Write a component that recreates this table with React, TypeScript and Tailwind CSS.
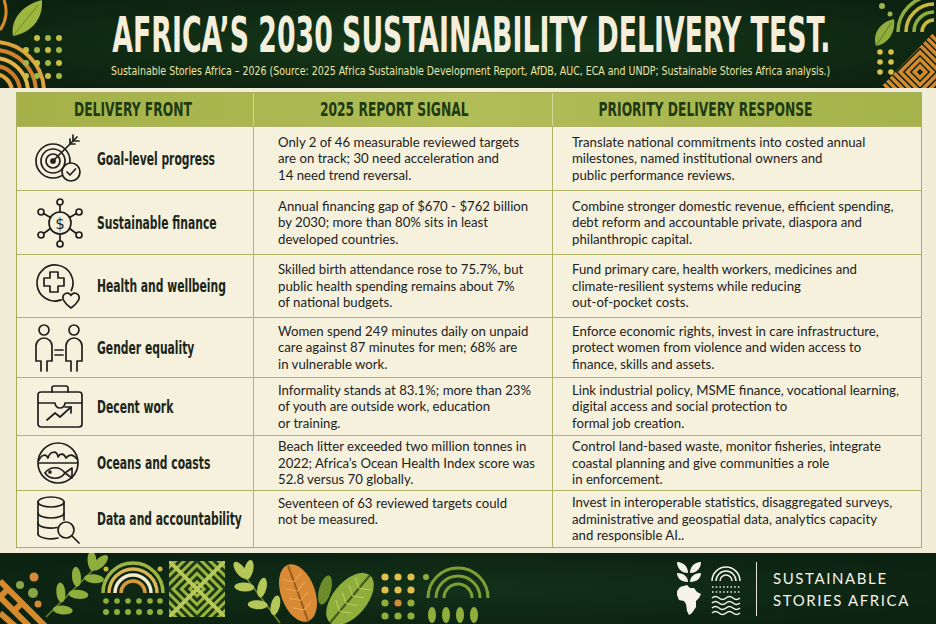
import React from "react";

const ink = "#1f1f1f";
const cream = "#f6f1dd";
const S = {
  fill: "none",
  stroke: ink,
  strokeWidth: 1.7,
  strokeLinecap: "round" as const,
  strokeLinejoin: "round" as const,
};

function TargetIcon() {
  return (
    <svg width="54" height="50" viewBox="0 0 54 50" {...S}>
      <circle cx="20" cy="27" r="17" />
      <circle cx="20" cy="27" r="12" />
      <circle cx="20" cy="27" r="7" />
      <circle cx="20" cy="27" r="2" fill={ink} />
      <path d="M20 27 L44 3" />
      <path d="M40 7 L40 1 M40 7 L46 7 M37 10 L37 5 M37 10 L42 10" />
      <circle cx="38" cy="38" r="9" fill={cream} />
      <path d="M34 38 L37 41 L42.5 35" />
    </svg>
  );
}

function FinanceIcon() {
  return (
    <svg width="54" height="50" viewBox="0 0 54 50" {...S}>
      <circle cx="27" cy="25" r="11" />
      <text x="27" y="30.5" textAnchor="middle" fontSize="15" fontFamily="DejaVu Sans" fill={ink} stroke="none">
        $
      </text>
      <path d="M27 14 V7 M27 36 V43 M17.5 19.5 L10.6 15.5 M36.5 19.5 L43.4 15.5 M17.5 30.5 L10.6 35.5 M36.5 30.5 L43.4 35.5" />
      <circle cx="27" cy="4" r="3" />
      <circle cx="27" cy="46" r="3" />
      <circle cx="8" cy="14" r="3" />
      <circle cx="46" cy="14" r="3" />
      <circle cx="8" cy="37" r="3" />
      <circle cx="46" cy="37" r="3" />
    </svg>
  );
}

function HealthIcon() {
  return (
    <svg width="54" height="50" viewBox="0 0 54 50" {...S}>
      <path d="M38.3 29.6 A18 18 0 1 0 28.2 38.9" />
      <path d="M17 11 h8 v6 h6 v8 h-6 v6 h-8 v-6 h-6 v-8 h6 z" />
      <path d="M38 47 C 31 42, 28 37, 31 33.5 C 33.5 31, 37 32, 38 34.5 C 39 32, 42.5 31, 45 33.5 C 48 37, 45 42, 38 47 Z" />
    </svg>
  );
}

function GenderIcon() {
  return (
    <svg width="54" height="50" viewBox="0 0 54 50" {...S}>
      <circle cx="11" cy="7" r="5" />
      <path d="M8 48 V38 H3 V23 a8 8 0 0 1 16 0 V38 H14 V48" />
      <path d="M22 27 H30 M22 32 H30" />
      <circle cx="41" cy="7" r="5" />
      <path d="M38 48 V38 H33 V23 a8 8 0 0 1 16 0 V38 H44 V48" />
    </svg>
  );
}

function WorkIcon() {
  return (
    <svg width="54" height="50" viewBox="0 0 54 50" {...S}>
      <path d="M19 10 V6 a2 2 0 0 1 2 -2 H33 a2 2 0 0 1 2 2 V10" />
      <rect x="5" y="10" width="44" height="35" rx="3" />
      <path d="M5 21 H22 a5 5 0 0 0 10 0 H49" />
      <path d="M14 38 L22 31 L27 35 L38 25" />
      <path d="M32 25 H38 V31" />
    </svg>
  );
}

function OceanIcon() {
  return (
    <svg width="54" height="50" viewBox="0 0 54 50" {...S}>
      <circle cx="25" cy="25" r="20" />
      <path d="M6 22 C 9 16, 13 16, 15 20 C 17 13, 24 12, 25 19 C 27 15, 31 15, 33 20 C 36 16, 40 16, 44 21" />
      <path d="M6 25 H44" />
      <path d="M12 35 C 17 28, 27 28, 32 35 C 27 42, 17 42, 12 35 Z" />
      <path d="M32 35 L39 30 V40 Z" />
      <circle cx="17" cy="34" r="1" fill={ink} />
    </svg>
  );
}

function DataIcon() {
  return (
    <svg width="54" height="50" viewBox="0 0 54 50" {...S}>
      <ellipse cx="18" cy="8" rx="13" ry="5" />
      <path d="M5 8 V40 M31 8 V26" />
      <path d="M5 19 A13 5 0 0 0 31 19" />
      <path d="M5 29 A13 5 0 0 0 24 33.5" />
      <path d="M5 40 A13 5 0 0 0 25 44" />
      <circle cx="33" cy="36" r="8" fill={cream} />
      <path d="M39 42 L46 49" />
    </svg>
  );
}

const rows = [
  {
    icon: TargetIcon,
    label: "Goal-level progress",
    h: "h-[64px]",
    signal: ["Only 2 of 46 measurable reviewed targets", "are on track; 30 need acceleration and", "14 need trend reversal."],
    response: ["Translate national commitments into costed annual", "milestones, named institutional owners and", "public performance reviews."],
  },
  {
    icon: FinanceIcon,
    label: "Sustainable finance",
    h: "h-[64px]",
    signal: ["Annual financing gap of $670 - $762 billion", "by 2030; more than 80% sits in least", "developed countries."],
    response: ["Combine stronger domestic revenue, efficient spending,", "debt reform and accountable private, diaspora and", "philanthropic capital."],
  },
  {
    icon: HealthIcon,
    label: "Health and wellbeing",
    h: "h-[63px]",
    signal: ["Skilled birth attendance rose to 75.7%, but", "public health spending remains about 7%", "of national budgets."],
    response: ["Fund primary care, health workers, medicines and", "climate-resilient systems while reducing", "out-of-pocket costs."],
  },
  {
    icon: GenderIcon,
    label: "Gender equality",
    h: "h-[60px]",
    signal: ["Women spend 249 minutes daily on unpaid", "care against 87 minutes for men; 68% are", "in vulnerable work."],
    response: ["Enforce economic rights, invest in care infrastructure,", "protect women from violence and widen access to", "finance, skills and assets."],
  },
  {
    icon: WorkIcon,
    label: "Decent work",
    h: "h-[58px]",
    signal: ["Informality stands at 83.1%; more than 23%", "of youth are outside work, education", "or training."],
    response: ["Link industrial policy, MSME finance, vocational learning,", "digital access and social protection to", "formal job creation."],
  },
  {
    icon: OceanIcon,
    label: "Oceans and coasts",
    h: "h-[55px]",
    signal: ["Beach litter exceeded two million tonnes in", "2022; Africa\u2019s Ocean Health Index score was", "52.8 versus 70 globally."],
    response: ["Control land-based waste, monitor fisheries, integrate", "coastal planning and give communities a role", "in enforcement."],
  },
  {
    icon: DataIcon,
    label: "Data and accountability",
    h: "h-[57px]",
    signal: ["Seventeen of 63 reviewed targets could", "not be measured."],
    response: ["Invest in interoperable statistics, disaggregated surveys,", "administrative and geospatial data, analytics capacity", "and responsible AI.."],
  },
];

const cond = "inline-block whitespace-nowrap font-['DejaVu_Sans_Condensed','DejaVu_Sans',sans-serif] font-stretch-condensed";

function Lines({ lines }: { lines: string[] }) {
  return (
    <div className="min-h-[49px] font-['Lato',sans-serif] text-[13.2px] leading-[16.5px] text-[#222] whitespace-nowrap">
      {lines.map((l, i) => (
        <div key={i}>{l}</div>
      ))}
    </div>
  );
}

function TopLeftDeco() {
  const arcs = [
    { r: 18, c: "#e2a43c" },
    { r: 26, c: "#cf7b2a" },
    { r: 34, c: "#e7b449" },
    { r: 42, c: "#d2832d" },
    { r: 50, c: "#dfa23d" },
  ];
  return (
    <svg width="70" height="88" viewBox="0 0 70 88">
      {arcs.map((a) => (
        <path key={a.r} d={`M-6 ${92 - a.r} A${a.r} ${a.r} 0 0 1 ${a.r - 6} 92`} fill="none" stroke={a.c} strokeWidth="4" />
      ))}
      <path d="M4 0 C 8 10, 6 22, 0 30" fill="none" stroke="#d98a2b" strokeWidth="3" />
      <path d="M13 36 C 10 20, 22 5, 42 0 C 43 18, 33 32, 13 36 Z" fill="#9db640" />
      <path d="M13 36 L38 5" stroke="#6f8a2a" strokeWidth="1" />
      {[26, 37, 48, 59].map((x, i) =>
        [38, 50, 63, 76].map((y, j) =>
          i === 0 && j < 1 ? null : (
            <circle key={`${x}-${y}`} cx={x} cy={y} r="3" fill={(i + j) % 2 ? "#c8be45" : "#9fb64a"} />
          )
        )
      )}
    </svg>
  );
}

function TopRightDeco() {
  const rs = [
    { r: 12, c: "#c9b83f" },
    { r: 20, c: "#8fae3c" },
    { r: 28, c: "#c9b83f" },
    { r: 36, c: "#8fae3c" },
  ];
  return (
    <svg width="64" height="88" viewBox="0 0 64 88">
      <defs>
        <clipPath id="tri">
          <polygon points="64,30 64,88 8,88" />
        </clipPath>
      </defs>
      {rs.map((a) => (
        <path key={a.r} d={`M${62 - a.r} 32 A${a.r} ${a.r} 0 0 1 62 ${32 - a.r}`} fill="none" stroke={a.c} strokeWidth="3.5" />
      ))}
      <circle cx="10" cy="6" r="3" fill="#9fb64a" />
      <circle cx="18" cy="14" r="2.5" fill="#9fb64a" />
      <path d="M4 46 C 0 34, 8 22, 22 19 C 24 32, 16 44, 4 46 Z" fill="#8fae3c" />
      <path d="M4 46 L19 23" stroke="#5f7c24" strokeWidth="1" />
      {[8, 19].map((x) => [52, 62, 72].map((y) => <circle key={`${x}-${y}`} cx={x} cy={y} r="2.8" fill="#d9bf4b" />))}
      <g clipPath="url(#tri)">
        <g transform="rotate(45 48 72)" fill="none" stroke="#d4892e" strokeWidth="3.5">
          {[8, 18, 28, 38, 48, 58, 68].map((s) => (
            <rect key={s} x={48 - s / 2} y={72 - s / 2} width={s} height={s} />
          ))}
        </g>
      </g>
    </svg>
  );
}

function Branch({ x1, y1, x2, y2, n, color }: { x1: number; y1: number; x2: number; y2: number; n: number; color: string }) {
  const ang = (Math.atan2(y2 - y1, x2 - x1) * 180) / Math.PI;
  const leaves = [];
  for (let i = 1; i <= n; i++) {
    const t = i / (n + 0.4);
    const x = x1 + (x2 - x1) * t;
    const y = y1 + (y2 - y1) * t;
    const side = i % 2 ? 1 : -1;
    leaves.push(
      <ellipse key={i} cx={x} cy={y} rx="4.5" ry="10" fill={color} transform={`rotate(${ang + 90 + side * 50} ${x} ${y}) translate(0 ${-9})`} />
    );
  }
  return (
    <g>
      <path d={`M${x1} ${y1} L${x2} ${y2}`} stroke="#6e8a2c" strokeWidth="1.5" />
      {leaves}
      <ellipse cx={x2} cy={y2} rx="4.5" ry="10" fill={color} transform={`rotate(${ang + 90} ${x2} ${y2}) translate(0 -6)`} />
    </g>
  );
}

function FooterDeco() {
  return (
    <svg width="490" height="71" viewBox="0 0 490 71">
      <defs>
        <clipPath id="corner">
          <rect x="0" y="14" width="48" height="57" />
        </clipPath>
        <clipPath id="maze">
          <rect x="169" y="8" width="56" height="56" />
        </clipPath>
      </defs>
      <g clipPath="url(#corner)" stroke="#d68a2e" strokeWidth="6">
        <path d="M0 28 L46 74 M0 44 L30 74 M0 60 L16 74 M8 36 L0 44 M22 50 L14 58" />
      </g>
      <circle cx="34" cy="24" r="4.5" fill="#d9893a" />
      <circle cx="20" cy="32" r="4" fill="#8aa54a" />
      <circle cx="33" cy="40" r="5" fill="#8aa54a" />
      <circle cx="38" cy="51" r="3.5" fill="#d9893a" />
      <Branch x1={46} y1={64} x2={96} y2={14} n={6} color="#8fae3c" />
      {[
        { r: 30, c: "#9cb441" },
        { r: 24, c: "#d8b653" },
        { r: 18, c: "#f3ecd1" },
        { r: 12, c: "#d99a3a" },
      ].map((a) => (
        <path key={a.r} d={`M${133 - a.r} 40 A${a.r} ${a.r} 0 0 1 ${133 + a.r} 40`} fill="none" stroke={a.c} strokeWidth="3.5" />
      ))}
      <circle cx="106" cy="16" r="2.5" fill="#c9b83f" />
      <circle cx="160" cy="16" r="2.5" fill="#c9b83f" />
      {[106, 117, 128, 139, 150, 160].map((x) => (
        <g key={x}>
          <circle cx={x} cy="48" r="2.8" fill="#8fae3c" />
          <circle cx={x} cy="59" r="3" fill="#8fae3c" />
        </g>
      ))}
      <g clipPath="url(#maze)" fill="none" stroke="#9bb53f" strokeWidth="3">
        <rect x="169" y="8" width="56" height="56" fill="#1c3a16" stroke="none" />
        <g transform="rotate(45 197 36)">
          {[10, 22, 34, 46, 58, 70].map((s) => (
            <rect key={s} x={197 - s / 2} y={36 - s / 2} width={s} height={s} />
          ))}
        </g>
        <path d="M169 8 L225 64 M225 8 L169 64" stroke="#b8c85a" strokeWidth="4" />
      </g>
      <Branch x1={280} y1={70} x2={244} y2={22} n={5} color="#b6c75a" />
      <g transform="rotate(-20 298 40)">
        <ellipse cx="298" cy="40" rx="17" ry="30" fill="#d98a34" />
        <path d="M298 11 V69" stroke="#9c5a1c" strokeWidth="2" />
        {[22, 32, 42, 52].map((y) => (
          <path key={y} d={`M298 ${y + 6} L288 ${y} M298 ${y + 6} L308 ${y}`} stroke="#e9a85a" strokeWidth="1" />
        ))}
      </g>
      <ellipse cx="325" cy="37" rx="6" ry="15" fill="#6d8d2c" transform="rotate(15 325 37)" />
      <g transform="rotate(40 350 46)">
        <ellipse cx="350" cy="46" rx="17" ry="31" fill="#8fae3c" />
        <path d="M350 15 V77" stroke="#3f5a1a" strokeWidth="2" />
        {[26, 36, 46, 56].map((y) => (
          <path key={y} d={`M350 ${y + 6} L340 ${y} M350 ${y + 6} L360 ${y}`} stroke="#b9cf62" strokeWidth="1" />
        ))}
      </g>
      {[385, 398, 411].map((x, i) =>
        [24, 37, 50, 63].map((y, j) => (
          <circle
            key={`${x}-${y}`}
            cx={x}
            cy={y}
            r="3.6"
            fill={j < 2 ? "#e0bf4e" : j === 2 && i === 1 ? "#d9893a" : "#8fae3c"}
          />
        ))
      )}
      <circle cx="426" cy="24" r="3" fill="#8fae3c" />
      {[14, 22, 30].map((r) => (
        <path key={r} d={`M${458 - r} 45 A${r} ${r} 0 0 1 ${458 + r} 45`} fill="none" stroke="#7f9f35" strokeWidth="3" />
      ))}
      {[432, 446, 460, 474].map((x) => (
        <ellipse key={x} cx={x} cy="62" rx="4" ry="8" fill="#8fae3c" />
      ))}
    </svg>
  );
}

function Logo() {
  return (
    <div className="flex items-center gap-[8px]">
      <svg width="26" height="56" viewBox="0 0 26 56" fill="#f5f2e8">
        <path d="M12 12 C 5 12, 1 7, 1 1 C 8 1, 12 6, 12 12 Z" />
        <path d="M14 12 C 21 12, 25 7, 25 1 C 18 1, 14 6, 14 12 Z" />
        <path d="M12 21 C 5 21, 1 17, 1 12 C 8 12, 12 16, 12 21 Z" />
        <path d="M14 21 C 21 21, 25 17, 25 12 C 18 12, 14 16, 14 21 Z" />
        <path d="M4 26 L11 24 L14 27 L18 27 L21 31 L25 33 L23 37 L20 40 L20 46 L16 52 L13 54 L11 50 L10 43 L8 40 L3 39 L1 34 L1 30 Z" />
      </svg>
      <svg width="32" height="54" viewBox="0 0 32 54" fill="none" stroke="#f5f2e8" strokeWidth="1.5">
        <path d="M2 19 A14 14 0 0 1 30 19 M6 19 A10 10 0 0 1 26 19 M10 19 A6 6 0 0 1 22 19" />
        <path d="M2 25 H30 M2 30 H30" strokeDasharray="1.5 2.2" />
        {[36, 41, 46, 51].map((y) => (
          <path key={y} d={`M2 ${y} q3.5 -3 7 0 t7 0 t7 0 t7 0`} />
        ))}
      </svg>
      <div className="w-px h-[54px] bg-[#e9e5d6] ml-[6px] mr-[8px]" />
      <div className="font-['Lato',sans-serif] text-[15px] leading-[22px] tracking-[1.6px] text-[#f5f2e8]">
        <div>SUSTAINABLE</div>
        <div>STORIES AFRICA</div>
      </div>
    </div>
  );
}

export default function App() {
  return (
    <div className="w-[936px] h-[624px] flex flex-col overflow-hidden bg-[#f2edd6]">
      <header className="h-[88px] shrink-0 flex bg-[radial-gradient(ellipse_at_center,#163a1b_0%,#0e2712_70%,#0b2010_100%)]">
        <div className="w-[70px] shrink-0">
          <TopLeftDeco />
        </div>
        <div className="flex-1 min-w-0 flex flex-col items-center pt-[10px]">
          <span className={`${cond} font-bold text-[50px] leading-none text-[#f4efdc] scale-x-[0.595] origin-center`}>
            AFRICA&rsquo;S 2030 SUSTAINABILITY DELIVERY TEST.
          </span>
          <span className={`${cond} mt-[5px] text-[12.8px] leading-none text-[#ebe4a6] scale-x-[0.82] origin-center`}>
            Sustainable Stories Africa &ndash; 2026 (Source: 2025 Africa Sustainable Development Report, AfDB, AUC, ECA and UNDP; Sustainable Stories Africa analysis.)
          </span>
        </div>
        <div className="w-[64px] shrink-0">
          <TopRightDeco />
        </div>
      </header>

      <main className="flex-1 pl-[16px] pr-[14px] pt-[4px]">
        <div className="border border-[#a9ae5c] bg-[#f6f1dd]">
          <div className="grid grid-cols-[236px_299px_369px] h-[33px] bg-gradient-to-r from-[#a3b148] via-[#b1bd57] to-[#a5b34b] text-[#1d3a12]">
            <div className="flex items-center justify-center pr-[4px]">
              <span className={`${cond} font-bold text-[19px] leading-none scale-x-[0.72] origin-center`}>DELIVERY FRONT</span>
            </div>
            <div className="flex items-center justify-center pr-[18px] border-l border-[#d3d79a]">
              <span className={`${cond} font-bold text-[19px] leading-none scale-x-[0.72] origin-center`}>2025 REPORT SIGNAL</span>
            </div>
            <div className="flex items-center justify-center pr-[62px] border-l border-[#d3d79a]">
              <span className={`${cond} font-bold text-[19px] leading-none scale-x-[0.72] origin-center`}>PRIORITY DELIVERY RESPONSE</span>
            </div>
          </div>
          {rows.map((r) => {
            const Icon = r.icon;
            return (
              <div key={r.label} className={`grid grid-cols-[236px_299px_369px] border-t border-[#b1b466] ${r.h}`}>
                <div className="flex items-center gap-[10px] pl-[16px]">
                  <div className="w-[54px] h-[50px] shrink-0">
                    <Icon />
                  </div>
                  <span className={`${cond} font-bold text-[18px] leading-none text-[#1b261a] scale-x-[0.665] origin-left`}>{r.label}</span>
                </div>
                <div className="flex items-center pl-[24px] border-l border-[#b1b466]">
                  <Lines lines={r.signal} />
                </div>
                <div className="flex items-center pl-[19px] border-l border-[#b1b466]">
                  <Lines lines={r.response} />
                </div>
              </div>
            );
          })}
        </div>
      </main>

      <footer className="h-[71px] shrink-0 flex items-center bg-[radial-gradient(ellipse_at_center,#12311a_0%,#0c2311_80%)]">
        <FooterDeco />
        <div className="ml-auto pr-[26px]">
          <Logo />
        </div>
      </footer>
    </div>
  );
}
